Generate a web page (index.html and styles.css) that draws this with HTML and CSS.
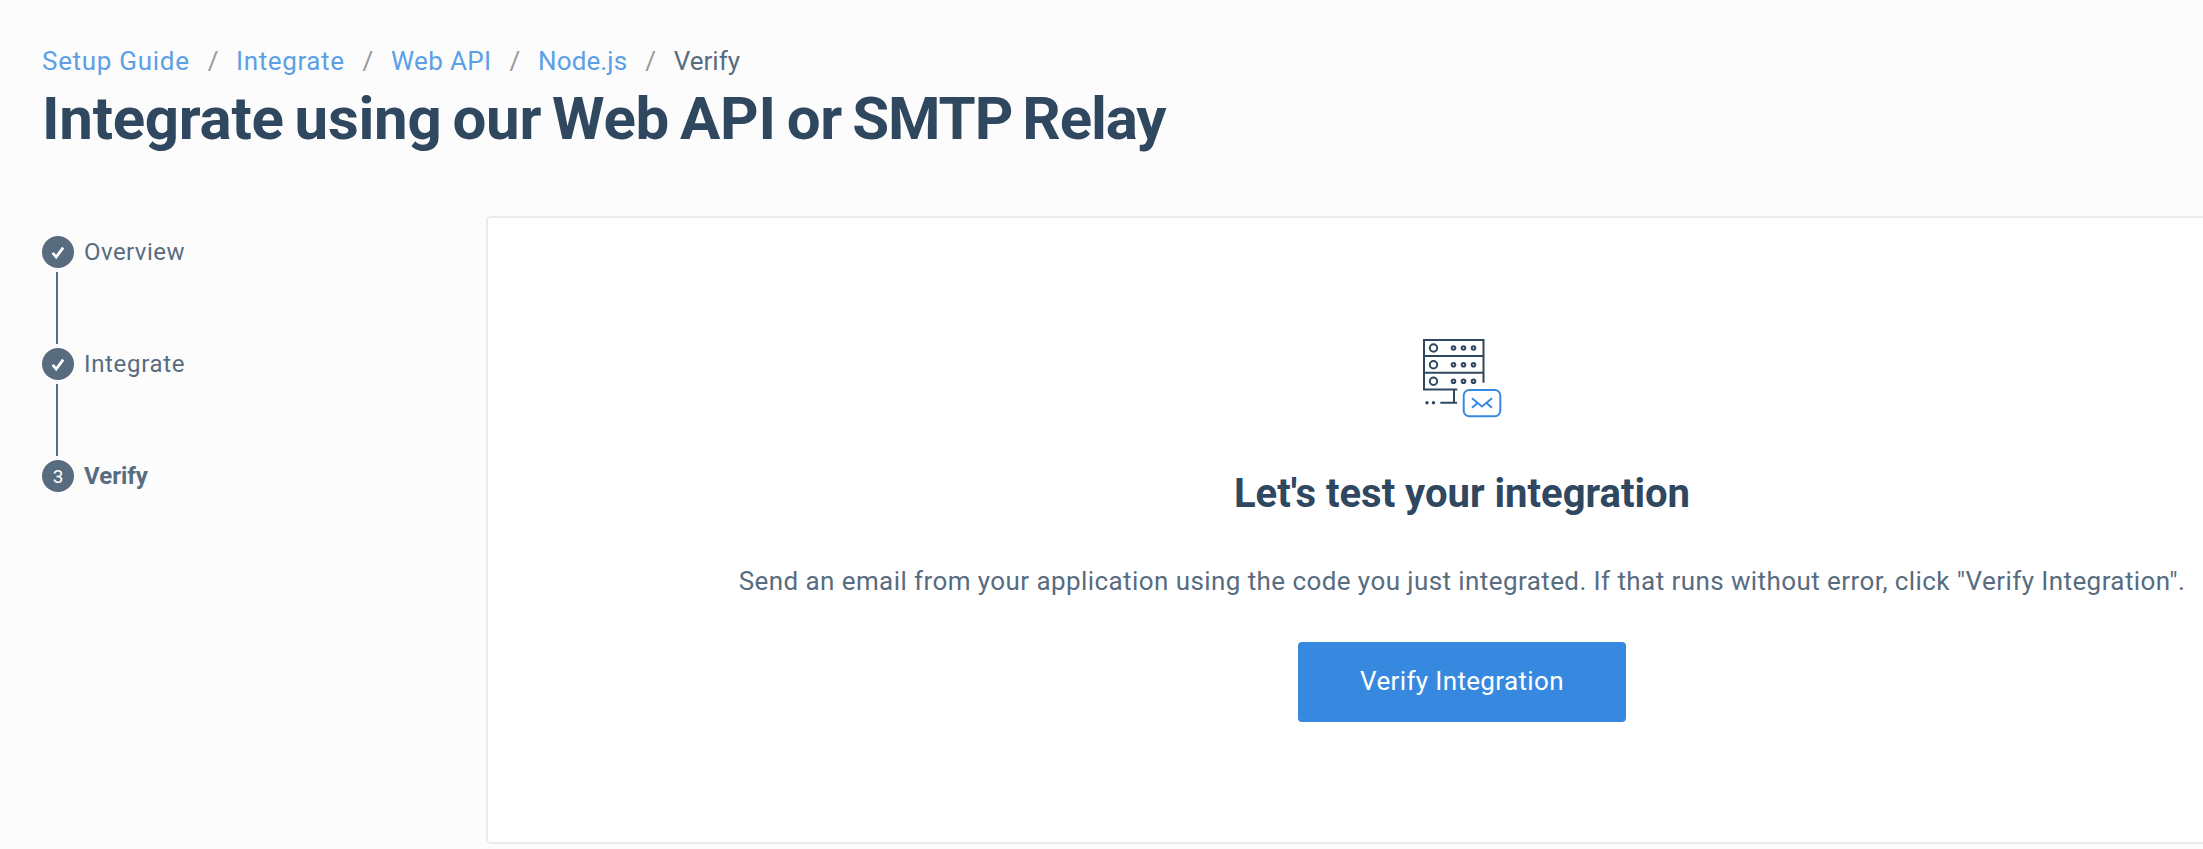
FILE: index.html
```html
<!DOCTYPE html>
<html lang="en">
<head>
<meta charset="utf-8">
<title>Integrate using our Web API or SMTP Relay</title>
<link rel="stylesheet" href="styles.css">
</head>
<body>
<header class="page-header">
  <nav class="breadcrumb">
    <a class="crumb crumb-guide">Setup Guide</a><span class="slash">/</span>
    <a class="crumb crumb-integrate">Integrate</a><span class="slash">/</span>
    <a class="crumb crumb-api">Web API</a><span class="slash">/</span>
    <a class="crumb crumb-node">Node.js</a><span class="slash">/</span>
    <span class="crumb-current">Verify</span>
  </nav>
  <h1 class="title"><span class="title-lead">Integrate using our Web API or</span> SMTP Relay</h1>
</header>
<main class="content">
  <ol class="steps">
    <li class="step">
      <span class="badge"><svg width="32" height="32" viewBox="0 0 32 32"><path d="M10.6 16.8l3.6 4.2 7-9.4" fill="none" stroke="#fff" stroke-width="2.7"/></svg></span>
      <span class="step-label label-overview">Overview</span>
    </li>
    <li class="connector"></li>
    <li class="step">
      <span class="badge"><svg width="32" height="32" viewBox="0 0 32 32"><path d="M10.6 16.8l3.6 4.2 7-9.4" fill="none" stroke="#fff" stroke-width="2.7"/></svg></span>
      <span class="step-label label-integrate">Integrate</span>
    </li>
    <li class="connector"></li>
    <li class="step">
      <span class="badge">3</span>
      <span class="step-label label-verify">Verify</span>
    </li>
  </ol>
  <section class="card">
    <svg class="server-icon" width="80" height="80" viewBox="0 0 80 80" fill="none">
      <g stroke="#2f475f" stroke-width="2">
        <path d="M61.5 44.7V2H2v49.4h33.3M2 18h59.5M2 34.7h59.5M32 52v12.7M18.3 64.7h16.7"/>
        <circle cx="11.5" cy="10" r="3.7"/><circle cx="11.5" cy="26.7" r="3.7"/><circle cx="11.5" cy="43.3" r="3.7"/>
        <circle cx="31.5" cy="10" r="1.8"/><circle cx="41.5" cy="10" r="1.8"/><circle cx="51.5" cy="10" r="1.8"/>
        <circle cx="31.5" cy="26.7" r="1.8"/><circle cx="41.5" cy="26.7" r="1.8"/><circle cx="51.5" cy="26.7" r="1.8"/>
        <circle cx="31.5" cy="43.3" r="1.8"/><circle cx="41.5" cy="43.3" r="1.8"/><circle cx="51.5" cy="43.3" r="1.8"/>
      </g>
      <g fill="#2f475f"><circle cx="5" cy="64.7" r="1.7"/><circle cx="11.5" cy="64.7" r="1.7"/></g>
      <g stroke="#3789e0" stroke-width="2">
        <rect x="41.7" y="52" width="36.6" height="26.2" rx="5.5"/>
        <path d="M50 60.3L60 68.5L70 60.3M50 69.8L55.2 65.2M70 69.8L64.8 65.2"/>
      </g>
    </svg>
    <h2 class="card-title">Let's test your integration</h2>
    <p class="card-text">Send an email from your application using the code you just integrated. If that runs without error, click "Verify Integration".</p>
    <button class="button">Verify Integration</button>
  </section>
</main>
</body>
</html>
```
FILE: styles.css
```css
* { box-sizing: border-box; }
body {
  margin: 0;
  height: 849px;
  overflow: hidden;
  background: #fcfcfc;
  color: #586c80;
  font-family: Roboto, sans-serif;
}
.page-header { padding: 45px 0 0 42px; }
.breadcrumb {
  display: flex;
  font-size: 26px;
  line-height: 32px;
}
.crumb { color: #5b9fe6; }
.crumb-guide { letter-spacing: 0.7px; }
.crumb-integrate { letter-spacing: 0.6px; }
.crumb-api { letter-spacing: 0.38px; }
.crumb-node { letter-spacing: 0.14px; }
.slash { margin: 0 17.7px 0 18px; color: #999; }
.title {
  margin: 6px 0 0;
  color: #2f475f;
  font-size: 60px;
  font-weight: 700;
  line-height: 72px;
  letter-spacing: -1.1px;
  word-spacing: -3.7px;
}
.title-lead { letter-spacing: -0.26px; }
.content {
  display: flex;
  align-items: flex-start;
  margin-top: 61px;
}
.steps {
  flex: none;
  width: 486px;
  margin: 0;
  padding: 20px 0 0 42px;
  list-style: none;
}
.step {
  display: flex;
  align-items: center;
  gap: 10px;
  height: 32px;
}
.badge {
  display: flex;
  align-items: center;
  justify-content: center;
  width: 32px;
  height: 32px;
  border-radius: 50%;
  background: #586c80;
  color: #fff;
  font-size: 19px;
}
.step-label { font-size: 24px; line-height: 32px; }
.label-overview { letter-spacing: 0.45px; }
.label-integrate { letter-spacing: 0.66px; }
.label-verify { font-weight: 700; }
.connector {
  width: 2px;
  height: 72px;
  margin: 4px 0 4px 14px;
  background: #586c80;
}
.card {
  display: flex;
  flex: none;
  flex-direction: column;
  align-items: center;
  width: 1952px;
  height: 628px;
  padding-top: 120px;
  border: 2px solid #e9eaef;
  border-radius: 5px;
  background: #fff;
}
.server-icon { flex: none; }
.card-title {
  margin: 52px 0 0;
  color: #2f475f;
  font-size: 40px;
  font-weight: 700;
  line-height: 48px;
}
.card-text {
  margin: 45px 0 0;
  font-size: 26px;
  line-height: 36px;
  letter-spacing: 0.42px;
  white-space: nowrap;
}
.button {
  width: 328px;
  height: 80px;
  margin-top: 43px;
  padding: 0 0 2px;
  border: 0;
  border-radius: 4px;
  background: #3789e0;
  color: #fff;
  font-family: inherit;
  font-size: 26px;
  letter-spacing: 0.35px;
}
```
